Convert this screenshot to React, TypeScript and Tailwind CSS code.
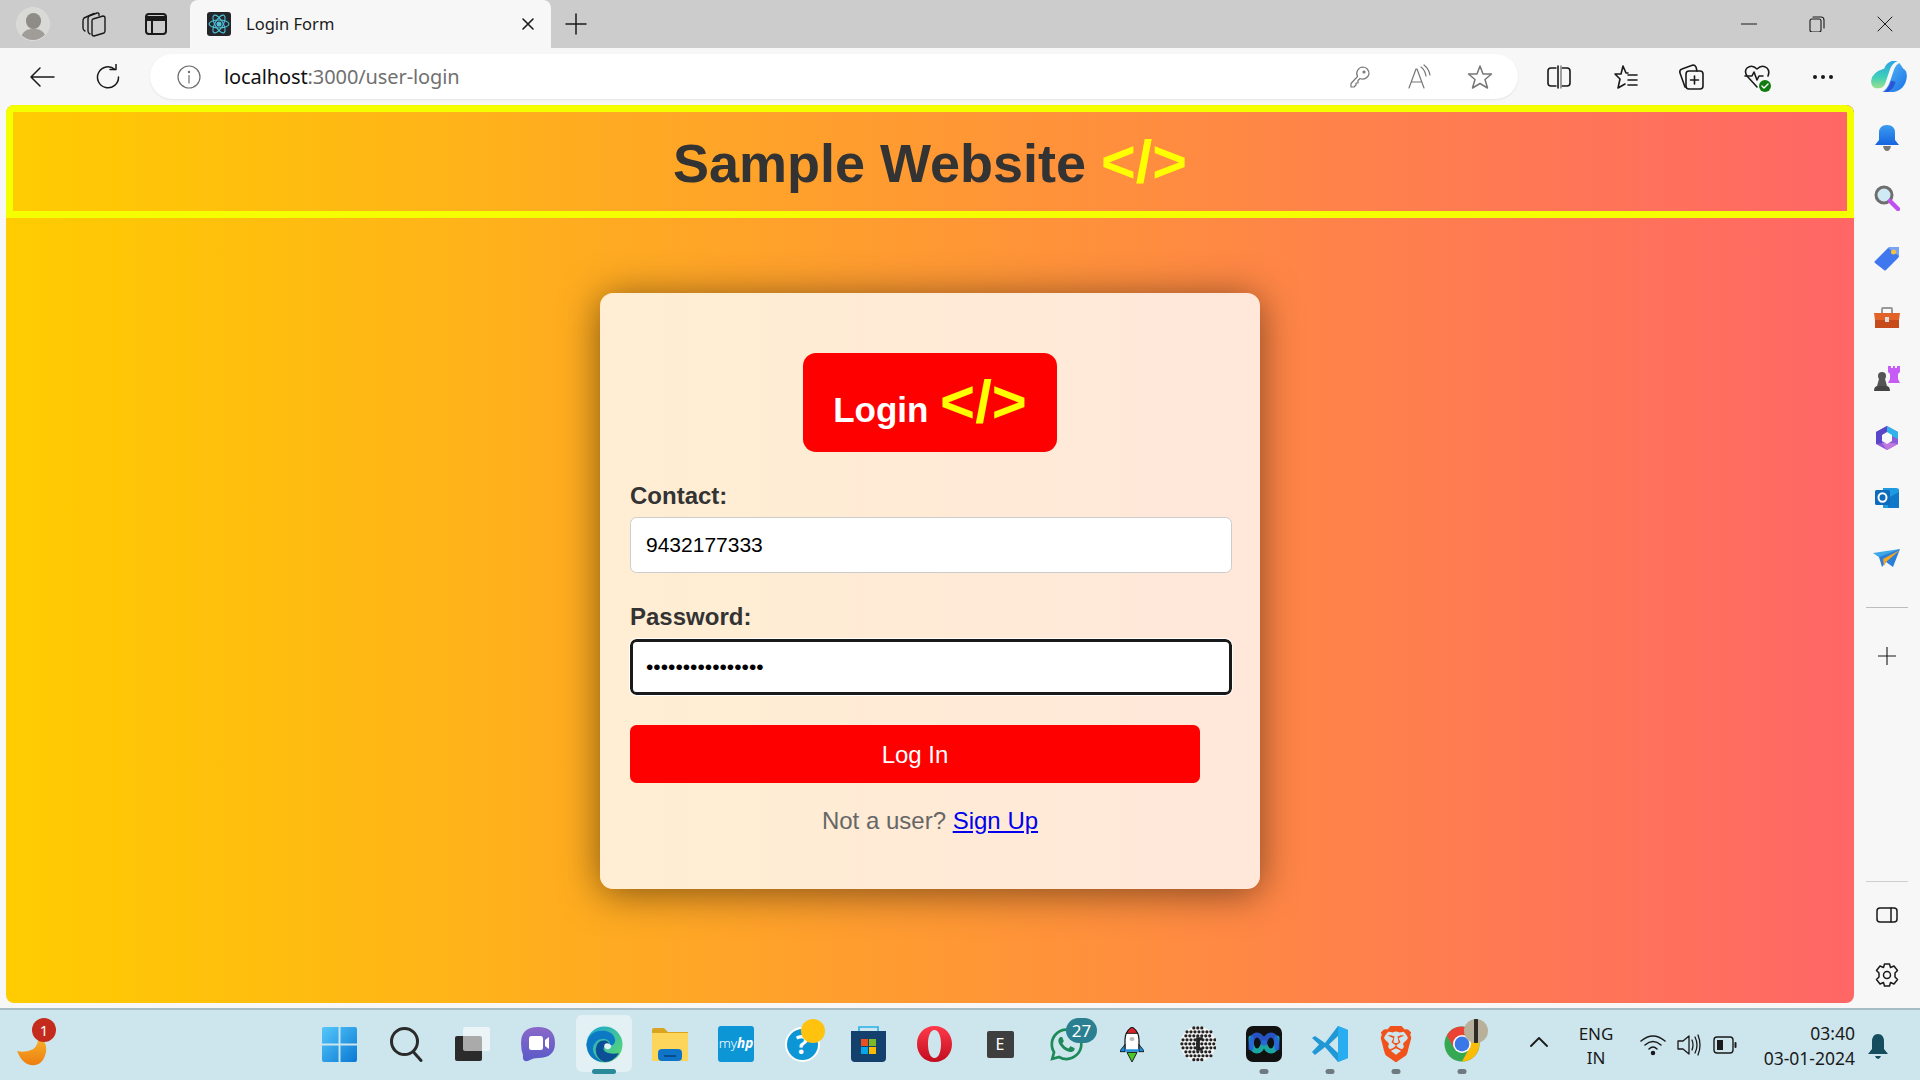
import React from "react";
import { FaWhatsapp } from "react-icons/fa";
import { SiBrave } from "react-icons/si";

const UI = "font-['Noto_Sans',sans-serif]";

function S({ w = 24, h = 24, vb, children, stroke = "#1a1a1a", sw = 1.6 }: { w?: number; h?: number; vb?: string; children: React.ReactNode; stroke?: string; sw?: number }) {
  return (
    <svg width={w} height={h} viewBox={vb ?? `0 0 ${w} ${h}`} fill="none" stroke={stroke} strokeWidth={sw} strokeLinecap="round" strokeLinejoin="round">
      {children}
    </svg>
  );
}

function TabBar() {
  return (
    <div className="flex h-[48px] shrink-0 bg-[#cccccc] pl-[3px] items-stretch">
      <div className="w-[60px] flex items-center justify-center">
        <div className="w-[34px] h-[34px] rounded-full bg-[#d9d9d6] border border-[#dcdcdc] overflow-hidden relative">
          <div className="absolute left-[9px] top-[5px] w-[15px] h-[16px] rounded-full bg-[#8f8c88]" />
          <div className="absolute left-[4px] top-[21px] w-[25px] h-[20px] rounded-full bg-[#a09d99]" />
        </div>
      </div>
      <div className="w-[60px] flex items-center justify-center">
        <S w={26} h={26} sw={1.4}>
          <path d="M13 8 L23 5 Q25 5 25 7 V20 Q25 21 24 22 L14 25 Q12 25 12 23 V10 Q12 8 13 8 Z" />
          <path d="M19 4.5 V3.5 Q19 1.5 17 2 L9 5 Q8 6 8 8 V20 Q8 22 10 23" />
          <path d="M14 2.5 L4 7 Q3 8 3 10 V17 Q3 19 5 20" />
        </S>
      </div>
      <div className="w-[66px] flex items-center justify-center">
        <S w={24} h={24} sw={2}>
          <rect x="2" y="2" width="20" height="20" rx="3" />
          <path d="M2 5 H22 V8 H2 Z" fill="#1a1a1a" />
          <path d="M8 8 V22" />
        </S>
      </div>
      <div className={`ml-px w-[361px] bg-[#f7f7f7] rounded-t-[8px] flex items-center pl-[17px] pr-[16px] ${UI}`}>
        <svg width="24" height="24" viewBox="0 0 24 24" fill="none" stroke="#4fc3dc" strokeWidth="1.1" className="rounded-[3px] bg-[#23272b]">
          <ellipse cx="12" cy="12" rx="10" ry="4" />
          <ellipse cx="12" cy="12" rx="10" ry="4" transform="rotate(60 12 12)" />
          <ellipse cx="12" cy="12" rx="10" ry="4" transform="rotate(120 12 12)" />
          <circle cx="12" cy="12" r="2" fill="#4fc3dc" />
        </svg>
        <span className="ml-[15px] text-[16.5px] text-[#1a1a1a] leading-none">Login Form</span>
        <span className="ml-auto flex">
          <S w={14} h={14}>
            <path d="M2 2 L12 12 M12 2 L2 12" />
          </S>
        </span>
      </div>
      <div className="w-[50px] flex items-center justify-center">
        <S w={22} h={22} sw={1.5}>
          <path d="M11 1 V21 M1 11 H21" />
        </S>
      </div>
      <div className="ml-auto flex pr-px">
        <div className="w-[68px] flex items-center justify-center">
          <S w={16} h={16} sw={1}>
            <path d="M0 8 H16" />
          </S>
        </div>
        <div className="w-[68px] flex items-center justify-center">
          <S w={16} h={16} sw={1.1}>
            <rect x="1" y="3" width="11" height="13" rx="2" />
            <path d="M4 1 H12 Q15 1 15 4 V12" />
          </S>
        </div>
        <div className="w-[68px] flex items-center justify-center">
          <S w={16} h={16} sw={1}>
            <path d="M1 1 L15 15 M15 1 L1 15" />
          </S>
        </div>
      </div>
    </div>
  );
}

function Copilot() {
  return (
    <svg width="36" height="32" viewBox="0 0 38 34">
      <defs>
        <linearGradient id="c1" x1="0" y1="0" x2="0" y2="1">
          <stop offset="0" stopColor="#2aa4e8" />
          <stop offset="0.6" stopColor="#3fd0b8" />
          <stop offset="1" stopColor="#9be08c" />
        </linearGradient>
        <linearGradient id="c2" x1="0" y1="0" x2="1" y2="1">
          <stop offset="0" stopColor="#58c0f5" />
          <stop offset="1" stopColor="#1a6fe8" />
        </linearGradient>
      </defs>
      <path d="M14 8 Q16 2 22 0 H28 Q21 3 19 12 L15 24 Q13 29 8 29 H5 Q0 28 0 21 Q1 12 14 8 Z" fill="url(#c1)" />
      <path d="M20 22 L24 10 Q26 4 30 2 Q33 6 34 8 Q38 10 38 16 Q37 30 24 33 H12 Q17 30 20 22 Z" fill="url(#c2)" />
      <path d="M14 33 Q20 27 21 21 L26 22 Q24 30 18 33 Z" fill="#2b54d8" />
    </svg>
  );
}

function ToolCell({ children, w = "w-[66px]" }: { children: React.ReactNode; w?: string }) {
  return <div className={`${w} shrink-0 flex items-center justify-center`}>{children}</div>;
}

function Toolbar() {
  return (
    <div className="flex h-[57px] shrink-0 bg-[#f7f7f7] pl-[9px] items-stretch overflow-hidden">
      <ToolCell>
        <S w={26} h={22} sw={1.5}>
          <path d="M25 11 H2 M11 2 L2 11 L11 20" />
        </S>
      </ToolCell>
      <ToolCell>
        <S w={26} h={26} sw={1.5}>
          <path d="M20 5.5 A10.5 10.5 0 1 0 23.5 13" />
          <path d="M15 5.5 H21 V0.5" />
        </S>
      </ToolCell>
      <div className={`ml-[9px] w-[1368px] shrink-0 h-[45px] mt-[6px] bg-white rounded-full flex items-center shadow-[0_1px_2px_rgba(0,0,0,0.08)] pl-[27px] pr-[8px] ${UI}`}>
        <S w={24} h={24} stroke="#6f6f6f" sw={1.2}>
          <circle cx="12" cy="12" r="11" />
          <path d="M12 10.5 V18" />
          <circle cx="12" cy="7" r="0.6" fill="#6f6f6f" />
        </S>
        <span className="ml-[23px] text-[20px] leading-none tracking-[-0.1px]">
          <span className="text-[#111]">localhost</span>
          <span className="text-[#707070]">:3000/user-login</span>
        </span>
        <div className="ml-auto flex h-full">
          <ToolCell w="w-[60px]">
            <S w={22} h={24} stroke="#777" sw={1.2}>
              <path d="M14 2 A6.5 6.5 0 0 1 20 9 A6.5 6.5 0 0 1 11 13.5 L9 15.5 V18 H7 V20 L5 22 H2 V18.5 L8.5 11.5 A6.5 6.5 0 0 1 14 2 Z" />
              <circle cx="15" cy="7" r="1" fill="#777" />
            </S>
          </ToolCell>
          <ToolCell w="w-[60px]">
            <S w={26} h={26} stroke="#777" sw={1.2}>
              <path d="M2 24 L9 5 H10 L17 24 M4.5 18 H14.5" />
              <path d="M14 3 Q18 6 19 12 M17 1 Q22 5 23 11" />
            </S>
          </ToolCell>
          <ToolCell w="w-[60px]">
            <S w={26} h={26} stroke="#777" sw={1.5}>
              <path d="M13 2 L16 10 H24.5 L18 15.5 L20.5 24 L13 19.5 L5.5 24 L8 15.5 L1.5 10 H10 Z" />
            </S>
          </ToolCell>
        </div>
      </div>
      <div className="ml-[8px] flex shrink-0">
        <ToolCell>
          <S w={24} h={24}>
            <rect x="1" y="3" width="22" height="18" rx="3" />
            <path d="M12 0 V24" stroke="#f7f7f7" strokeWidth="5" />
            <path d="M11 1 V23" />
            <path d="M14 1 V23" stroke="#888" />
          </S>
        </ToolCell>
        <ToolCell>
          <S w={26} h={26}>
            <path d="M11 2 L14 9 H16 M3 10 H9 L11 2 M3 10 L8 15 L6 24 L13 20" />
            <path d="M16 11 H25 M16 16 H25 M16 21 H25" />
          </S>
        </ToolCell>
        <ToolCell>
          <S w={26} h={28}>
            <rect x="8" y="8" width="17" height="18" rx="3" />
            <path d="M16.5 13 V21 M12.5 17 H20.5" />
            <path d="M8 24 H7 L2 10 Q1 7 4 6 L15 2 Q17 2 18 4 L19 8" />
          </S>
        </ToolCell>
        <ToolCell>
          <div className="relative">
            <S w={26} h={26}>
              <path d="M13 23 L3 12 Q0 7 3 4 Q8 0 13 5 Q18 0 23 4 Q26 7 24 12" />
              <path d="M1 12 H8 L10 8 L13 16 L15 12 H19" />
            </S>
            <div className="absolute -right-[1px] -bottom-[2px] w-[12px] h-[12px] rounded-full bg-[#107c10] flex items-center justify-center">
              <S w={8} h={8} stroke="#fff" sw={1.4}>
                <path d="M1 4 L3 6 L7 2" />
              </S>
            </div>
          </div>
        </ToolCell>
        <ToolCell>
          <div className="flex gap-[4px]">
            <div className="w-[4px] h-[4px] rounded-full bg-[#1a1a1a]" />
            <div className="w-[4px] h-[4px] rounded-full bg-[#1a1a1a]" />
            <div className="w-[4px] h-[4px] rounded-full bg-[#1a1a1a]" />
          </div>
        </ToolCell>
        <ToolCell>
          <Copilot />
        </ToolCell>
      </div>
    </div>
  );
}

function SideCell({ children }: { children: React.ReactNode }) {
  return <div className="h-[60px] flex items-center justify-center shrink-0">{children}</div>;
}

function Sidebar() {
  return (
    <div className="flex-1 flex flex-col items-center pt-[3px] pb-[3px] bg-[#f7f7f7]">
      <SideCell>
        <svg width="24" height="26" viewBox="0 0 24 26">
          <defs>
            <linearGradient id="b1" x1="0" y1="0" x2="0" y2="1">
              <stop offset="0" stopColor="#3b9cf0" />
              <stop offset="1" stopColor="#1565e0" />
            </linearGradient>
          </defs>
          <path d="M12 0 Q20 0 20 8 V15 L24 20 H0 L4 15 V8 Q4 0 12 0 Z" fill="url(#b1)" />
          <path d="M8 21 H16 Q15 26 12 26 Q9 26 8 21 Z" fill="#777" />
        </svg>
      </SideCell>
      <SideCell>
        <svg width="26" height="26" viewBox="0 0 26 26">
          <circle cx="10" cy="10" r="8" fill="#cfeaf5" stroke="#6e6e6e" strokeWidth="3" />
          <path d="M16 16 L24 24" stroke="#c24df0" strokeWidth="4.5" strokeLinecap="round" />
        </svg>
      </SideCell>
      <SideCell>
        <svg width="26" height="26" viewBox="0 0 26 26">
          <path d="M1 16 L14 3 Q15 2 17 2 H24 Q25 2 25 3 V11 Q25 12 24 13 L12 25 Q11 26 10 25 L1 18 Q0 17 1 16 Z" fill="#3f78ee" />
          <path d="M14 3 Q15 2 17 2 H24 Q25 2 25 3 V11 L14 3 Z" fill="#7aa3f5" />
          <circle cx="19.5" cy="7" r="2.5" fill="#f5c33b" />
        </svg>
      </SideCell>
      <SideCell>
        <svg width="28" height="22" viewBox="0 0 28 22">
          <path d="M9 6 V2 Q9 1 10 1 H18 Q19 1 19 2 V6" fill="none" stroke="#999" strokeWidth="2" />
          <path d="M1 6 H27 L26 13 H2 Z" fill="#e2632a" />
          <path d="M2 13 H26 V21 H2 Z" fill="#c64a1a" />
          <rect x="12" y="10" width="4" height="5" fill="#ddd" />
        </svg>
      </SideCell>
      <SideCell>
        <svg width="28" height="28" viewBox="0 0 28 28">
          <circle cx="9" cy="12" r="4" fill="#555" />
          <path d="M6 15 H12 L14 22 H4 Z" fill="#555" />
          <path d="M1 27 Q1 22 5 22 H13 Q17 22 17 27 Z" fill="#444" />
          <path d="M15 2 H18 V4 H20 V2 H22 V4 H24 V2 H27 V8 L25 10 V15 L27 19 H15 L17 15 V10 L15 8 Z" fill="#c65cf5" />
        </svg>
      </SideCell>
      <SideCell>
        <svg width="26" height="26" viewBox="0 0 26 26">
          <path d="M13 1 L24 7 V19 L13 25 L2 19 V7 Z" fill="#8a5cd8" />
          <path d="M13 1 L24 7 V14 L18 11 L13 8 Z" fill="#2fb3e8" />
          <path d="M2 7 L13 1 L13 8 L8 11 V18 L2 19 Z" fill="#5a46c8" />
          <path d="M8 18 L18 18 L24 19 L13 25 Z" fill="#c078e0" />
          <path d="M8 10 L13 7 L18 10 V16 L13 19 L8 16 Z" fill="#f7f7f7" />
        </svg>
      </SideCell>
      <SideCell>
        <svg width="26" height="24" viewBox="0 0 26 24">
          <path d="M9 2 H22 Q25 2 25 4 V22 H9 Z" fill="#1e9be0" />
          <path d="M14 12 L25 6 V22 H14 Z" fill="#0f78c8" />
          <rect x="1" y="4" width="15" height="15" rx="1.5" fill="#0f6cbd" />
          <ellipse cx="8.5" cy="11.5" rx="4" ry="4.2" fill="none" stroke="#fff" strokeWidth="2" />
        </svg>
      </SideCell>
      <SideCell>
        <svg width="28" height="20" viewBox="0 0 28 20">
          <path d="M0 5 L27 1 L10 12 Z" fill="#3fa8e8" />
          <path d="M6 9 L27 1 L20 19 L13 14 L9 19 Z" fill="#2a7fd8" />
          <path d="M10 11 L27 2 L13 14 L11 18 Z" fill="#f5a623" />
        </svg>
      </SideCell>
      <div className="mt-[19px] w-[42px] h-px bg-[#bdbdbd] shrink-0" />
      <div className="mt-[18px]">
        <SideCell>
          <S w={18} h={18} sw={1.1}>
            <path d="M9 0 V18 M0 9 H18" />
          </S>
        </SideCell>
      </div>
      <div className="mt-auto w-[42px] h-px bg-[#cfcfcf] shrink-0 mb-[3px]" />
      <SideCell>
        <S w={22} h={18} sw={1.5}>
          <rect x="1" y="2" width="20" height="14" rx="3" />
          <path d="M15 2 V16" />
        </S>
      </SideCell>
      <SideCell>
        <S w={26} h={26} sw={1.5}>
          <circle cx="13" cy="13" r="3.5" />
          <path d="M10.5 2 H15.5 L16.5 5.5 L20 4 L23.5 8.5 L21 11 V15 L23.5 17.5 L20 22 L16.5 20.5 L15.5 24 H10.5 L9.5 20.5 L6 22 L2.5 17.5 L5 15 V11 L2.5 8.5 L6 4 L9.5 5.5 Z" />
        </S>
      </SideCell>
    </div>
  );
}

function LoginPage() {
  return (
    <div className="w-[1848px] h-full rounded-[8px] overflow-hidden bg-[linear-gradient(90deg,#ffcc00,#ff6666)] flex flex-col items-center font-['Liberation_Sans',Arial,sans-serif]">
      <header className="w-full h-[113px] shrink-0 border-[7px] border-[#f4ff00] rounded-t-[8px] flex items-center justify-center">
        <h1 className="text-[54px] font-bold text-[#333333] leading-none whitespace-nowrap">
          Sample Website <span className="text-[59.5px] text-[#ffff00]">&lt;/&gt;</span>
        </h1>
      </header>
      <div className="mt-[75px] w-[660px] h-[596px] rounded-[13px] bg-white/80 shadow-[0_4px_39px_rgba(0,0,0,0.5)] flex flex-col items-center pt-[60px] px-[30px]">
        <div className="w-[254px] h-[99px] rounded-[13px] bg-[#ff0000] text-white font-bold flex items-baseline justify-center text-[35px] leading-[97px] whitespace-nowrap">
          Login&nbsp;<span className="ml-[2px] text-[60px] text-[#ffff00]">&lt;/&gt;</span>
        </div>
        <div className="w-full mt-[30px]">
          <label className="block text-[24px] font-bold text-[#333333] leading-[27px] mb-[8px]">Contact:</label>
          <input readOnly value="9432177333" className="w-[602px] h-[56px] rounded-[6.5px] border border-[#cccccc] bg-white pl-[15px] text-[21px] text-black outline-none" />
        </div>
        <div className="w-full mt-[30px]">
          <label className="block text-[24px] font-bold text-[#333333] leading-[27px] mb-[9px]">Password:</label>
          <input readOnly type="password" value="abcdefghijklmnop" className="w-[602px] h-[56px] rounded-[6.5px] border-[3px] border-[#1a1a1a] bg-white pl-[13px] text-[21px] text-black outline outline-1 outline-white" />
        </div>
        <button className="self-start mt-[30px] w-[570px] h-[58px] pt-[1px] rounded-[6.5px] bg-[#ff0000] text-white text-[24px]">Log In</button>
        <p className="mt-[24px] text-[24px] leading-[28px] text-[#666666] whitespace-nowrap">
          Not a user? <a href="#" className="text-[#0000ee] underline">Sign Up</a>
        </p>
      </div>
    </div>
  );
}

function TaskCell({ children, w = "w-[66px]" }: { children: React.ReactNode; w?: string }) {
  return <div className={`${w} h-full flex items-center justify-center relative shrink-0`}>{children}</div>;
}

function Dot() {
  return <div className="absolute bottom-[4px] left-1/2 -translate-x-1/2 w-[9px] h-[5px] rounded-full bg-[#6f7a80]" />;
}

function DotsGlobe() {
  const dots: React.ReactNode[] = [];
  for (let r = 0; r < 9; r++) {
    for (let c = 0; c < 9; c++) {
      const x = 2 + c * 4.2;
      const y = 2 + r * 4.2;
      const d = Math.hypot(x - 18.8, y - 18.8);
      if (d < 18.5) dots.push(<circle key={`${r}-${c}`} cx={x + (r % 2) * 1.2} cy={y} r={1.7} fill="#222" />);
    }
  }
  return (
    <svg width="36" height="36" viewBox="0 0 38 38">
      <circle cx="19" cy="19" r="18.5" fill="#f4f4f4" />
      {dots}
      <path d="M17 12 H24 V15 H21 V23 H24 V26 H17 Z" fill="#222" />
    </svg>
  );
}

function Taskbar() {
  return (
    <div className={`h-[72px] shrink-0 bg-[#cde6ed] border-t-2 border-[#a6bcc2] relative flex items-stretch ${UI}`}>
      <div className="w-[305px] shrink-0 relative">
        <svg width="34" height="30" viewBox="0 0 36 34" className="absolute left-[16px] top-[27px]">
          <defs>
            <linearGradient id="fx" x1="0" y1="0" x2="0" y2="1">
              <stop offset="0" stopColor="#f6b52a" />
              <stop offset="1" stopColor="#ee7d10" />
            </linearGradient>
          </defs>
          <path d="M0 16 Q10 18 18 14 Q24 10 24 0 Q34 4 33 16 Q30 32 18 32 Q6 32 0 16 Z" fill="url(#fx)" />
        </svg>
        <div className="absolute left-[32px] top-[8px] w-[24px] h-[24px] rounded-full bg-[#c42b1c] text-white text-[15px] flex items-center justify-center leading-none">1</div>
      </div>
      <div className="flex h-full pb-[2px]">
        <TaskCell w="w-[68px]">
          <svg width="35" height="35" viewBox="0 0 36 36">
            <defs>
              <linearGradient id="w1" x1="0" y1="0" x2="1" y2="1">
                <stop offset="0" stopColor="#55c8fa" />
                <stop offset="1" stopColor="#0a78d4" />
              </linearGradient>
            </defs>
            <path d="M0 2 Q0 0 2 0 H17 V17 H0 Z M19 0 H34 Q36 0 36 2 V17 H19 Z M0 19 H17 V36 H2 Q0 36 0 34 Z M19 19 H36 V34 Q36 36 34 36 H19 Z" fill="url(#w1)" />
          </svg>
        </TaskCell>
        <TaskCell>
          <S w={33} h={35} stroke="#2a2a2a" sw={3}>
            <circle cx="14.5" cy="14.5" r="13" />
            <path d="M23.5 25 L31 33.5" />
          </S>
        </TaskCell>
        <TaskCell>
          <div className="relative w-[35px] h-[34px]">
            <div className="absolute left-0 bottom-0 w-[27px] h-[25px] rounded-[2px] bg-[#2b2b2b]" />
            <div className="absolute left-[8px] top-0 w-[27px] h-[24px] rounded-[2px] bg-white/60" />
          </div>
        </TaskCell>
        <TaskCell>
          <svg width="34" height="35" viewBox="0 0 34 35">
            <defs>
              <linearGradient id="t1" x1="0" y1="0" x2="0" y2="1">
                <stop offset="0" stopColor="#8a68c8" />
                <stop offset="1" stopColor="#5a5ac8" />
              </linearGradient>
            </defs>
            <path d="M17 0 Q34 0 34 16 Q34 31 17 31 Q12 31 9 33 Q1 37 2 28 Q0 23 0 16 Q0 0 17 0 Z" fill="url(#t1)" />
            <rect x="8" y="9" width="14" height="14" rx="2.5" fill="#fff" />
            <path d="M24 13 L28 10 V22 L24 19 Z" fill="#fff" />
          </svg>
        </TaskCell>
        <TaskCell>
          <div className="absolute left-[5px] top-[5px] w-[56px] h-[57px] rounded-[6px] bg-[#e3f1f5]" />
          <svg width="37" height="37" viewBox="0 0 38 38" className="relative">
            <defs>
              <linearGradient id="e1" x1="0" y1="0" x2="1" y2="1">
                <stop offset="0" stopColor="#1aa3d8" />
                <stop offset="1" stopColor="#5fdc6a" />
              </linearGradient>
            </defs>
            <circle cx="19" cy="19" r="18.5" fill="url(#e1)" />
            <path d="M0.5 19 Q3 4 19 5 Q28 6 30 14 Q30 20 24 20 Q26 14 18 13 Q8 13 7 24 Q8 33 18 37 Q2 36 0.5 19 Z" fill="#0d79c4" />
            <path d="M10 24 Q11 14 20 15 Q24 16 24 20 Q18 18 18 24 Q20 30 34 28 Q28 37 19 37 Q10 34 10 24 Z" fill="#0b4f96" />
            <path d="M19 19 Q22 16 26 20 Q26 24 21 24 Q18 22 19 19 Z" fill="#e3f1f5" />
          </svg>
          <div className="absolute bottom-[4px] left-1/2 -translate-x-1/2 w-[24px] h-[5px] rounded-full bg-[#2a8a9a]" />
        </TaskCell>
        <TaskCell>
          <svg width="36" height="33" viewBox="0 0 36 33">
            <path d="M0 2 Q0 0 2 0 H12 L16 4 H36 V33 H0 Z" fill="#d9a520" />
            <path d="M0 5 H36 V33 H0 Z" fill="#fcd55a" />
            <rect x="6" y="21" width="24" height="12" rx="4" fill="#0d74c8" />
            <path d="M12 28 H24" stroke="#063f78" strokeWidth="1.5" />
          </svg>
        </TaskCell>
        <TaskCell>
          <div className="w-[36px] h-[36px] rounded-[3px] bg-[#0d96d6] flex items-center justify-center text-white text-[13.5px] leading-none whitespace-nowrap">
            <span className="font-light">my</span>
            <span className="italic font-bold">hp</span>
          </div>
        </TaskCell>
        <TaskCell>
          <div className="w-[35px] h-[35px] rounded-full bg-[#0d96d6] border-[2px] border-white flex items-center justify-center text-white text-[26px] font-bold leading-none">?</div>
          <div className="absolute left-[32px] top-[9px] w-[24px] h-[24px] rounded-full bg-[#ffc20e]" />
        </TaskCell>
        <TaskCell>
          <svg width="35" height="36" viewBox="0 0 35 36">
            <path d="M8 5 V1 H27 V5" fill="none" stroke="#29b0ea" strokeWidth="1.6" />
            <path d="M0 5 H35 V32 Q35 36 31 36 H4 Q0 36 0 32 Z" fill="#14406e" />
            <rect x="10" y="13" width="7" height="7" fill="#e8501f" />
            <rect x="18" y="13" width="7" height="7" fill="#7db926" />
            <rect x="10" y="21" width="7" height="7" fill="#05a5ea" />
            <rect x="18" y="21" width="7" height="7" fill="#fdb900" />
          </svg>
        </TaskCell>
        <TaskCell>
          <svg width="35" height="36" viewBox="0 0 35 36">
            <defs>
              <linearGradient id="o1" x1="0" y1="0" x2="0" y2="1">
                <stop offset="0" stopColor="#ff3a4a" />
                <stop offset="1" stopColor="#c10d1f" />
              </linearGradient>
            </defs>
            <path fillRule="evenodd" d="M17.5 0 C28 0 35 8 35 18 C35 28 28 36 17.5 36 C7 36 0 28 0 18 C0 8 7 0 17.5 0 Z M17.5 4 C13 4 11 11 11 18 C11 25 13 32 17.5 32 C22 32 24 25 24 18 C24 11 22 4 17.5 4 Z" fill="url(#o1)" />
          </svg>
        </TaskCell>
        <TaskCell>
          <div className="w-[27px] h-[27px] rounded-[2px] bg-[#3e3e3e] flex items-center justify-center text-white text-[16px] leading-none">E</div>
        </TaskCell>
        <TaskCell>
          <FaWhatsapp className="text-[#1e8a5a] text-[37px]" />
          <div className="absolute left-[33px] top-[8px] w-[31px] h-[25px] rounded-full bg-[#2a8090] text-white text-[17px] flex items-center justify-center leading-none">27</div>
        </TaskCell>
        <TaskCell>
          <svg width="24" height="35" viewBox="0 0 24 44" preserveAspectRatio="none">
            <path d="M12 0 Q19 6 19 16 V30 H5 V16 Q5 6 12 0 Z" fill="#fff" stroke="#111" strokeWidth="1.2" />
            <path d="M12 0 Q16 3 17.5 8 H6.5 Q8 3 12 0 Z" fill="#d8232a" stroke="#111" strokeWidth="1" />
            <circle cx="12" cy="15" r="2.5" fill="#bbb" />
            <path d="M5 22 L0 30 V31 H5 Z M19 22 L24 30 V31 H19 Z" fill="#1e90e0" stroke="#111" strokeWidth="1" />
            <path d="M5 28 H19 V31 H5 Z" fill="#1e90e0" />
            <path d="M7 32 H17 L12 44 Z" fill="#4cc62a" stroke="#111" strokeWidth="1" />
          </svg>
        </TaskCell>
        <TaskCell>
          <DotsGlobe />
        </TaskCell>
        <TaskCell>
          <svg width="36" height="36" viewBox="0 0 36 36">
            <rect width="36" height="36" rx="7" fill="#111" />
            <path d="M5 12 Q5 25 11 25 Q16 25 18 15 Q20 25 25 25 Q31 25 31 12" fill="none" stroke="#1aa7a0" strokeWidth="5" strokeLinecap="round" />
            <path d="M5 22 Q5 9 11 9 Q16 9 18 19 Q20 9 25 9 Q31 9 31 22" fill="none" stroke="#2a5fe0" strokeWidth="5" strokeLinecap="round" opacity="0.85" />
          </svg>
          <Dot />
        </TaskCell>
        <TaskCell>
          <svg width="36" height="36" viewBox="0 0 36 36">
            <path d="M0 12 L3 10 L13 17 L26 0 L36 4 V32 L26 36 L13 21 L3 29 L0 26 L7 18.5 Z" fill="#2198d6" />
            <path d="M26 0 L36 4 V32 L26 36 Z" fill="#28aef0" />
            <path d="M26 10 V27 L17 18.5 Z" fill="#cde6ed" />
          </svg>
          <Dot />
        </TaskCell>
        <TaskCell>
          <SiBrave className="text-[#f1511b] text-[36px]" />
          <Dot />
        </TaskCell>
        <TaskCell>
          <svg width="36" height="36" viewBox="0 0 38 38">
            <circle cx="19" cy="19" r="18.5" fill="#34a853" />
            <path d="M19 0.5 A18.5 18.5 0 0 0 3 10 L11 24 L19 13 H35 A18.5 18.5 0 0 0 19 0.5 Z" fill="#ea4335" />
            <path d="M35 10 A18.5 18.5 0 0 1 19 37.5 L27 23 L19 10 Z" fill="#fbbc05" />
            <circle cx="19" cy="19" r="9.5" fill="#fff" />
            <circle cx="19" cy="19" r="7.8" fill="#3b78e7" />
          </svg>
          <div className="absolute left-[35px] top-[9px] w-[24px] h-[24px] rounded-full bg-[#b8b09a] overflow-hidden flex justify-center">
            <div className="w-[4px] h-full bg-[#2e2a26]" />
          </div>
          <Dot />
        </TaskCell>
      </div>
      <div className="absolute left-[1530px] top-[26px]">
        <S w={18} h={12} sw={1.8}>
          <path d="M1 10 L9 2 L17 10" />
        </S>
      </div>
      <div className="absolute left-[1560px] top-[12px] w-[72px] text-center text-[17px] leading-[24px] text-[#1a1a1a]">
        <div>ENG</div>
        <div>IN</div>
      </div>
      <div className="absolute left-[1640px] top-[24px]">
        <S w={26} h={22} sw={1.5}>
          <path d="M1 7 Q13 -3 25 7 M5 11 Q13 4 21 11 M9 15 Q13 11 17 15" />
          <circle cx="13" cy="19" r="1.5" fill="#1a1a1a" />
        </S>
      </div>
      <div className="absolute left-[1676px] top-[22px]">
        <S w={26} h={26} sw={1.3}>
          <path d="M2 9 H7 L13 4 V22 L7 17 H2 Z" />
          <path d="M16 8 Q18 13 16 18 M19 5 Q23 13 19 21 M22 3 Q26 13 22 23" />
        </S>
      </div>
      <div className="absolute left-[1713px] top-[25px]">
        <S w={24} h={20} sw={1.4}>
          <rect x="1" y="2" width="19" height="16" rx="3" />
          <rect x="4" y="5" width="6" height="10" fill="#1a1a1a" stroke="none" />
          <path d="M22.5 8 V12" strokeWidth="2" />
        </S>
      </div>
      <div className="absolute right-[65px] top-[11px] text-right text-[17.5px] leading-[25px] text-[#1a1a1a] whitespace-nowrap">
        <div>03:40</div>
        <div>03-01-2024</div>
      </div>
      <div className="absolute left-[1868px] top-[24px]">
        <svg width="20" height="26" viewBox="0 0 20 26">
          <path d="M10 0 Q16 0 16 8 V15 L20 20 H0 L4 15 V8 Q4 0 10 0 Z" fill="#154c5e" />
          <path d="M7 22 H13 Q12 25 10 25 Q8 25 7 22 Z" fill="#154c5e" />
        </svg>
      </div>
    </div>
  );
}

export default function App() {
  return (
    <div className="w-[1920px] h-[1080px] overflow-hidden flex flex-col bg-[#f7f7f7]">
      <TabBar />
      <Toolbar />
      <div className="flex-1 min-h-0 flex">
        <div className="pl-[6px] pb-[5px] h-full">
          <LoginPage />
        </div>
        <Sidebar />
      </div>
      <Taskbar />
    </div>
  );
}
